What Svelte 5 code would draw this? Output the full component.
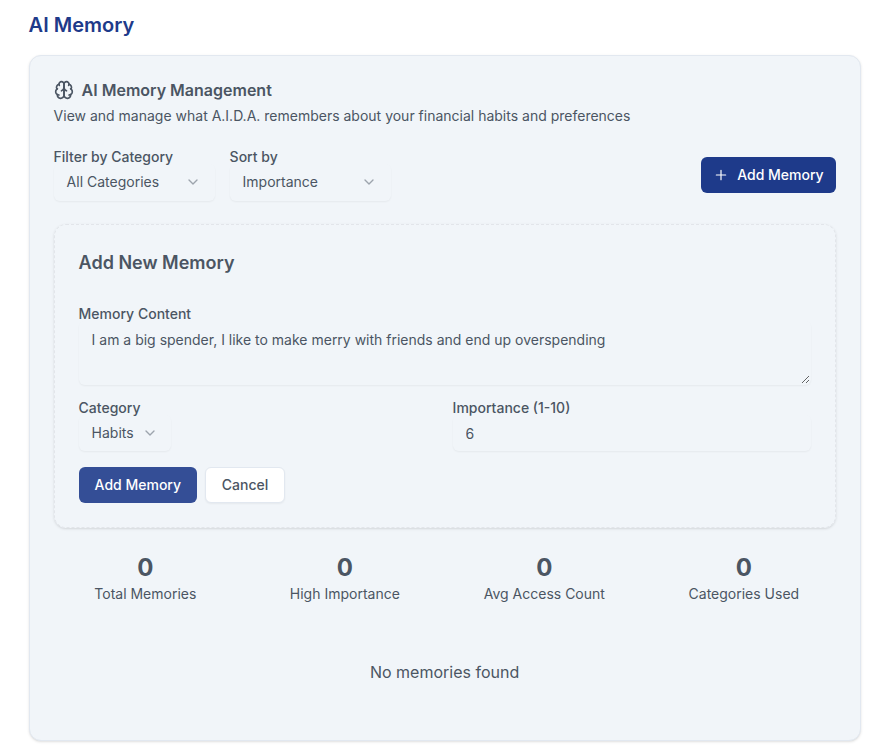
<script>
  let content = $state('I am a big spender, I like to make merry with friends and end up overspending');
  let importance = $state('6');
  const filters = [
    { label: 'Filter by Category', value: 'All Categories' },
    { label: 'Sort by', value: 'Importance' }
  ];
  const stats = ['Total Memories', 'High Importance', 'Avg Access Count', 'Categories Used'];
</script>

{#snippet chevron()}
  <svg class="chevron" viewBox="0 0 24 24" width="16" height="16"><path d="m6 9 6 6 6-6" /></svg>
{/snippet}

<main>
  <h1>AI Memory</h1>
  <section class="card">
    <header>
      <h2>
        <svg viewBox="0 0 24 24" width="20" height="20">
          <path d="M12 5a3 3 0 1 0-5.997.125 4 4 0 0 0-2.526 5.77 4 4 0 0 0 .556 6.588A4 4 0 1 0 12 18Z" />
          <path d="M12 5a3 3 0 1 1 5.997.125 4 4 0 0 1 2.526 5.77 4 4 0 0 1-.556 6.588A4 4 0 1 1 12 18Z" />
          <path d="M15 13a4.5 4.5 0 0 1-3-4 4.5 4.5 0 0 1-3 4" />
          <path d="M17.599 6.5a3 3 0 0 0 .399-1.375" />
          <path d="M6.003 5.125A3 3 0 0 0 6.401 6.5" />
          <path d="M3.477 10.896a4 4 0 0 1 .585-.396" />
          <path d="M19.938 10.5a4 4 0 0 1 .585.396" />
          <path d="M6 18a4 4 0 0 1-1.967-.516" />
          <path d="M19.967 17.484A4 4 0 0 1 18 18" />
        </svg>
        AI Memory Management
      </h2>
      <p>View and manage what A.I.D.A. remembers about your financial habits and preferences</p>
    </header>

    <div class="toolbar">
      <div class="filters">
        {#each filters as f}
          <div class="field">
            <span class="label">{f.label}</span>
            <button class="control select wide">{f.value}{@render chevron()}</button>
          </div>
        {/each}
      </div>
      <button class="btn primary add">
        <svg viewBox="0 0 24 24" width="16" height="16"><path d="M5 12h14M12 5v14" /></svg>
        Add Memory
      </button>
    </div>

    <div class="form">
      <h3>Add New Memory</h3>
      <div class="field">
        <label class="label" for="content">Memory Content</label>
        <textarea id="content" class="control" spellcheck="false" bind:value={content}></textarea>
      </div>
      <div class="pair">
        <div class="field">
          <span class="label">Category</span>
          <button class="control select">Habits{@render chevron()}</button>
        </div>
        <div class="field">
          <label class="label" for="importance">Importance (1-10)</label>
          <input id="importance" class="control" bind:value={importance} />
        </div>
      </div>
      <div class="actions">
        <button class="btn primary hovered">Add Memory</button>
        <button class="btn outline">Cancel</button>
      </div>
    </div>

    <div class="stats">
      {#each stats as s}
        <div><strong>0</strong><span>{s}</span></div>
      {/each}
    </div>
    <p class="empty">No memories found</p>
  </section>
</main>

<style>
  :global(body) { background: #fff; }
  main, main * { box-sizing: border-box; }
  main {
    height: 754px;
    padding: 11px 17.4px 0 28.6px;
    font: 14px/20px Inter, sans-serif;
    color: #4b5563;
  }
  h1, h2, h3, p { margin: 0; }
  h1 { font-size: 20px; line-height: 28px; font-weight: 600; color: #1e3a8a; }
  svg { fill: none; stroke: currentColor; stroke-width: 2; stroke-linecap: round; stroke-linejoin: round; flex: none; }
  .card {
    margin-top: 16px;
    height: 686px;
    padding: 24px;
    border: 1px solid #e2e8f0;
    border-radius: 12px;
    background: #f1f5f9;
    box-shadow: 0 1px 3px rgb(0 0 0 / .1), 0 1px 2px -1px rgb(0 0 0 / .1);
  }
  h2 { display: flex; align-items: center; gap: 8px; font-size: 16px; line-height: 20px; font-weight: 600; }
  header p { margin-top: 6px; }
  .toolbar { display: flex; justify-content: space-between; align-items: center; margin-top: 24px; height: 50px; }
  .filters { display: flex; gap: 15px; height: 50px; }
  .field { display: flex; flex-direction: column; align-items: flex-start; }
  .label { font-weight: 500; line-height: 14px; }
  .control {
    border: 0;
    border-radius: 6px;
    background: transparent;
    color: inherit;
    font: inherit;
    height: 36px;
    padding: 8px 13px;
    box-shadow: 0 1px 2px rgb(0 0 0 / .05);
    outline: none;
  }
  .select { display: flex; align-items: center; justify-content: space-between; gap: 8px; }
  .wide { width: 161px; height: 37px; flex: none; padding: 8px 14px 9px 13px; }
  .chevron { opacity: .5; }
  .btn {
    display: flex;
    align-items: center;
    gap: 8px;
    height: 36px;
    padding: 0 16px;
    border: 0;
    border-radius: 6px;
    font: inherit;
    font-weight: 500;
  }
  .primary { color: #fff; background: #1e3a8a; }
  .add { padding: 0 12px; }
  .add svg { stroke-width: 1.8; }
  .hovered { background: #344e96; }
  .outline { width: 80px; padding: 0; justify-content: center; color: #4b5563; background: #fff; border: 1px solid #e2e8f0; box-shadow: 0 1px 2px rgb(0 0 0 / .05); }
  .form {
    margin-top: 24px;
    height: 304px;
    padding: 24px;
    border: 1px dashed #e2e5ea;
    border-radius: 12px;
    box-shadow: 0 1px 3px rgb(0 0 0 / .1), 0 1px 2px -1px rgb(0 0 0 / .1);
  }
  h3 { font-size: 18px; line-height: 28px; font-weight: 600; margin-bottom: 30px; }
  textarea.control { width: 100%; height: 64px; display: block; resize: vertical; border: 1px solid transparent; padding: 8px 12px; }
  .pair { display: grid; grid-template-columns: 1fr 1fr; gap: 16px; margin-top: 16px; }
  input.control { width: 100%; }
  .actions { display: flex; gap: 8px; margin-top: 16px; }
  .stats { display: grid; grid-template-columns: repeat(4, 1fr); gap: 16px; margin-top: 24px; text-align: center; }
  .stats strong { display: block; font-size: 24px; line-height: 32px; font-weight: 700; }
  .stats span { display: block; }
  .empty { margin-top: 24px; padding: 32px 0; font-size: 16px; line-height: 24px; text-align: center; }
</style>
